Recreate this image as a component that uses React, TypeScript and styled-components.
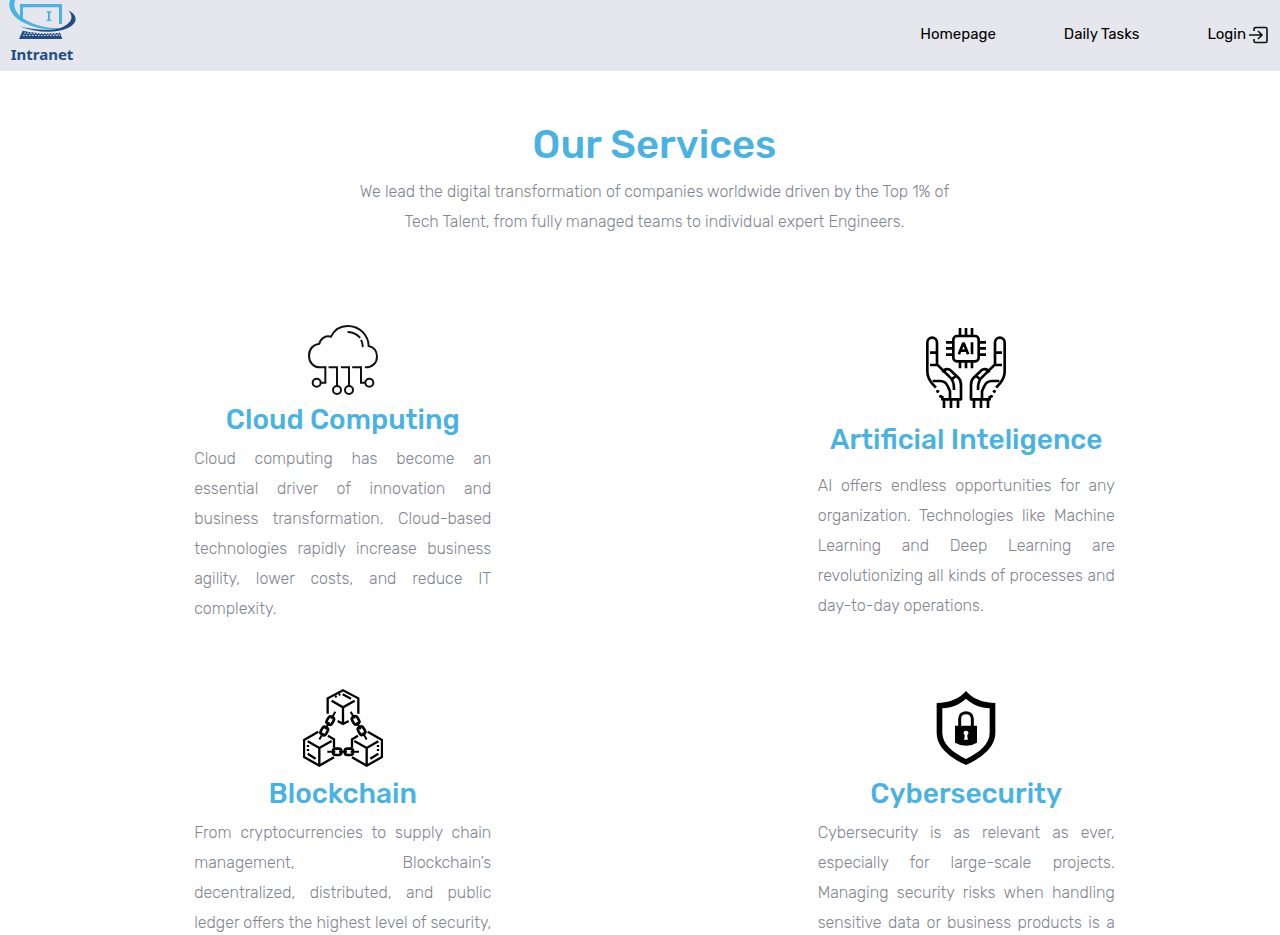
import React from "react";
import styled, { createGlobalStyle } from "styled-components";

const GlobalStyle = createGlobalStyle`
  * { box-sizing: border-box; }
  body {
    margin: 0;
    background: #fff;
    font-family: Rubik, Roboto, sans-serif;
  }
  h1, h2, p { margin: 0; }
`;

const Page = styled.div`
  height: 100vh;
  overflow: hidden;
`;

const Header = styled.header`
  display: flex;
  justify-content: space-between;
  height: 71px;
  padding: 0 12px 0 8px;
  background: #e6e7ec;
`;

const Brand = styled.a`
  display: flex;
  flex-direction: column;
  align-items: center;
  color: #1f4c86;
  font: 700 15px/26px "Noto Sans", sans-serif;
  text-decoration: none;
`;

const Nav = styled.nav`
  display: flex;
  align-items: center;
  gap: 68px;
  height: 68px;
`;

const NavLink = styled.a`
  display: flex;
  align-items: center;
  gap: 3px;
  color: #000;
  font-size: 15px;
  line-height: 18px;
  text-decoration: none;
`;

const Main = styled.main`
  padding: 50px 2px 0 31px;
`;

const Intro = styled.section`
  display: flex;
  flex-direction: column;
  align-items: center;
  gap: 8px;
  text-align: center;
`;

const PageTitle = styled.h1`
  color: #48b3e2;
  font-size: 40px;
  font-weight: 500;
  line-height: 48px;
`;

const Text = styled.p`
  max-width: 600px;
  color: #83858f;
  font-size: 16px;
  font-weight: 300;
  line-height: 30px;
`;

const Services = styled.section`
  display: grid;
  grid-template-columns: 1fr 1fr;
  place-items: center;
  row-gap: 65px;
  padding-top: 88px;
`;

const Card = styled.article<{ $gap: number }>`
  display: flex;
  flex-direction: column;
  align-items: center;
  gap: ${(p) => p.$gap}px;
  width: 297px;
`;

const CardTitle = styled.h2`
  color: #48b3e2;
  font-size: 28px;
  font-weight: 500;
  line-height: 33px;
`;

const CardText = styled(Text)<{ $continued?: boolean }>`
  width: 100%;
  text-align: justify;
  text-align-last: ${(p) => (p.$continued ? "justify" : "left")};
`;

const LogoMark = () => (
  <svg width="68" height="41" viewBox="24 0 204 123" aria-hidden="true">
    <path d="M60 60V12H186V72H177V22H69V66Z" fill="#48b3e2" />
    <path d="M140 34H154V38H150V59H154V63H140V59H144V38H140Z" fill="#48b3e2" />
    <path d="M30 0C22 22 36 50 69 67C103 85 151 94 190 84C150 87 108 78 77 60C50 44 36 20 46 0Z" fill="#48b3e2" />
    <path d="M205 31C235 46 234 70 202 85C168 101 104 98 57 78C104 92 160 94 190 80C217 67 221 48 205 31Z" fill="#1f4c86" />
    <path d="M68 92C105 100 145 102 180 98L187 117H57Z" fill="#1f4c86" />
    <path d="M73 99L178 102M69 106H180" stroke="#e6e7ec" strokeWidth="3" strokeDasharray="5 4" />
  </svg>
);

const LoginIcon = () => (
  <svg width="19" height="20" viewBox="0 -2 19 20" fill="none" stroke="#111" strokeWidth="1.6" aria-hidden="true">
    <path d="M5 5V3Q5 1.5 6.5 1.5H16.5Q18 1.5 18 3V15Q18 16.5 16.5 16.5H6.5Q5 16.5 5 15V13M0 9H13M9 5L13 9L9 13" />
  </svg>
);

const CloudIcon = () => (
  <svg width="70" height="70" viewBox="45 30 210 210" fill="none" stroke="#111" strokeWidth="6" strokeLinecap="round" aria-hidden="true">
    <path d="M97 157H81C60 157 48 140 48 122C48 101 62 88 79 86C83 69 98 61 114 65C124 44 142 33 164 33C200 33 226 60 227 93C243 96 252 109 252 125C252 143 239 157 218 157" />
    <path d="M97 157V203H84M109 157H132V212M146 157H168V212M180 157H204V203H216" />
    <path d="M166 51C181 52 191 57 200 67M205 77C208 83 209 88 209 94" />
    <circle cx="71" cy="203" r="12" />
    <circle cx="132" cy="225" r="12" />
    <circle cx="168" cy="225" r="12" />
    <circle cx="229" cy="203" r="12" />
  </svg>
);

const Hand = () => (
  <>
    <path d="M57 206L48 196C38 184 34 174 34 160V74C34 54 63 54 63 74V139L103 179Q114 190 114 212M46 104H58M46 141H63" />
    <path d="M82 160C86 152 98 151 105 158L127 179Q135 187 135 200V244H79V238M110 182L119 174M54 189H72Q89 189 96 206L102 220V240M84 246V267M105 246V267M126 246V267" />
    <circle cx="65" cy="220" r="5" fill="#000" stroke="none" />
    <circle cx="74" cy="235" r="5" fill="#000" stroke="none" />
  </>
);

const AiIcon = () => (
  <svg width="80" height="80" viewBox="30 30 240 240" fill="none" stroke="#000" strokeWidth="8" strokeLinecap="square" strokeLinejoin="round" aria-hidden="true">
    <rect x="112" y="54" width="76" height="76" rx="11" />
    <path d="M132 50V34M150 50V34M168 50V34M132 134V147M150 134V147M168 134V147M108 73H94M108 91H94M108 110H94M192 73H206M192 91H206M192 110H206" />
    <path d="M130 105L141 77H144L155 105M135 98H150M168 77V105" />
    <Hand />
    <g transform="translate(300 0) scale(-1 1)">
      <Hand />
    </g>
  </svg>
);

const ChainIcon = () => (
  <svg width="80" height="80" viewBox="30 27 240 240" fill="none" stroke="#000" strokeWidth="7" aria-hidden="true">
    <path d="M104 101V55L150 31L196 55V101M116 62L150 82L185 62M150 82V131M134 123L150 132L167 123" />
    <path d="M126 51L131 48M137 45L142 42M149 43L174 56" />
    <path d="M76 155L33 180V231L79 257L123 232M44 184L79 204L116 183M105 167L123 178V203M79 204V257" />
    <path d="M45 195V201M45 207V213M44 221L68 236" />
    <path d="M224 155L267 180V231L221 257L177 232M256 184L221 204L184 183M195 167L177 178V203M221 204V257" />
    <path d="M255 195V201M255 207V213M256 221L232 236" />
    <g strokeWidth="8">
      <g transform="translate(103 137) rotate(-60)">
        <rect x="-31" y="-9" width="25" height="18" rx="8" />
        <rect x="5" y="-9" width="25" height="18" rx="8" />
        <path d="M-48 0H-25M-12 0H12M24 0H48" strokeWidth="6" />
      </g>
      <g transform="translate(197 137) rotate(60)">
        <rect x="-31" y="-9" width="25" height="18" rx="8" />
        <rect x="5" y="-9" width="25" height="18" rx="8" />
        <path d="M-48 0H-25M-12 0H12M24 0H48" strokeWidth="6" />
      </g>
      <rect x="120" y="206" width="25" height="19" rx="8" />
      <rect x="155" y="206" width="25" height="19" rx="8" />
      <path d="M103 215H127M138 215H162M173 215H198" strokeWidth="6" />
    </g>
  </svg>
);

const ShieldIcon = () => (
  <svg width="80" height="80" viewBox="30 27 240 240" aria-hidden="true">
    <path d="M150 33C171 57 199 68 238 69V158C238 202 197 233 150 255C103 233 62 202 62 158V69C101 68 129 57 150 33ZM150 56C129 75 107 83 79 85V158C79 193 111 217 150 237C189 217 221 193 221 158V85C193 83 171 75 150 56Z" fill="#000" fillRule="evenodd" />
    <path d="M131 138V116C131 92 169 92 169 116V138" fill="none" stroke="#000" strokeWidth="9" />
    <path d="M117 137H183V188Q150 207 117 188Z" fill="#000" />
    <path d="M150 152A7 7 0 0 1 154 165V170L156 179H144L146 170V165A7 7 0 0 1 150 152Z" fill="#fff" />
  </svg>
);

type Service = {
  title: string;
  icon: React.ReactNode;
  gap: number;
  continued?: boolean;
  text: string;
};

const services: Service[] = [
  {
    title: "Cloud Computing",
    icon: <CloudIcon />,
    gap: 8,
    text: "Cloud computing has become an essential driver of innovation and business transformation. Cloud-based technologies rapidly increase business agility, lower costs, and reduce IT complexity.",
  },
  {
    title: "Artificial Inteligence",
    icon: <AiIcon />,
    gap: 15,
    text: "AI offers endless opportunities for any organization. Technologies like Machine Learning and Deep Learning are revolutionizing all kinds of processes and day-to-day operations.",
  },
  {
    title: "Blockchain",
    icon: <ChainIcon />,
    gap: 8,
    continued: true,
    text: "From cryptocurrencies to supply chain management, Blockchain’s decentralized, distributed, and public ledger offers the highest level of security,",
  },
  {
    title: "Cybersecurity",
    icon: <ShieldIcon />,
    gap: 8,
    continued: true,
    text: "Cybersecurity is as relevant as ever, especially for large-scale projects. Managing security risks when handling sensitive data or business products is a",
  },
];

export default function App() {
  return (
    <Page>
      <GlobalStyle />
      <Header>
        <Brand href="#">
          <LogoMark />
          <span>Intranet</span>
        </Brand>
        <Nav>
          <NavLink href="#">Homepage</NavLink>
          <NavLink href="#">Daily Tasks</NavLink>
          <NavLink href="#">
            Login
            <LoginIcon />
          </NavLink>
        </Nav>
      </Header>
      <Main>
        <Intro>
          <PageTitle>Our Services</PageTitle>
          <Text>
            We lead the digital transformation of companies worldwide driven by the Top 1% of Tech
            Talent, from fully managed teams to individual expert Engineers.
          </Text>
        </Intro>
        <Services>
          {services.map((s) => (
            <Card key={s.title} $gap={s.gap}>
              {s.icon}
              <CardTitle>{s.title}</CardTitle>
              <CardText $continued={s.continued}>{s.text}</CardText>
            </Card>
          ))}
        </Services>
      </Main>
    </Page>
  );
}
